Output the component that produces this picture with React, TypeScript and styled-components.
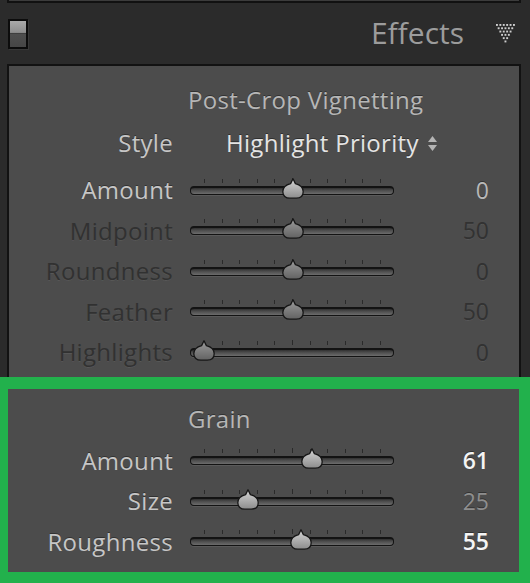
import styled, { createGlobalStyle } from 'styled-components';

const GlobalStyle = createGlobalStyle`
  html, body {
    margin: 0;
    padding: 0;
    background: #2b2b2b;
  }
  body {
    font-family: 'Open Sans', 'Noto Sans', sans-serif;
  }
`;

type Tone = 'light' | 'dim';
type ValueTone = 'light' | 'dim' | 'bright' | 'muted';

const labelColors: Record<Tone, string> = {
  light: '#c6c6c6',
  dim: '#313131',
};

const valueColors: Record<ValueTone, string> = {
  light: '#b8b8b8',
  dim: '#323232',
  bright: '#f4f4f4',
  muted: '#8e8e8e',
};

const Page = styled.div`
  width: 530px;
  height: 583px;
  overflow: hidden;
  background: #2b2b2b;
`;

const PrevPanelEdge = styled.div`
  height: 1px;
  margin: 0 9px 0 7px;
  background: #3c3c3c;
  border: 2px solid #111;
  border-top: none;
`;

const Header = styled.header`
  height: 61px;
  display: flex;
  align-items: center;
  padding: 0 15px 0 8px;
`;

const Toggle = styled.div`
  width: 16px;
  height: 26px;
  border: 2px solid #0c0c0c;
  background: linear-gradient(
    #aaaaaa 0%,
    #8e8e8e 44%,
    #3a3a3a 47%,
    #4e4e4e 52%,
    #464646 100%
  );
  box-shadow: 1px 1px 0 #383838;
`;

const PanelTitle = styled.h2`
  margin: 0 0 0 auto;
  font-size: 30px;
  font-weight: 400;
  line-height: 1;
  color: #9c9c9c;
  padding-bottom: 2px;
`;

const CollapseIcon = styled.svg`
  margin-left: 32px;
  flex: none;
`;

const Panel = styled.section`
  margin: 0 9px 0 7px;
  background: #4c4c4c;
  border: 2px solid #121212;
  border-bottom: none;
  padding: 19px 0 4.5px;
`;

const GrainBox = styled.section`
  background: #4c4c4c;
  border: solid #22b14c;
  border-width: 12px 11px 11px 8px;
  padding: 15px 0 10px 1px;
`;

const SectionTitle = styled.h3`
  margin: 0;
  height: 30px;
  line-height: 30px;
  padding-left: 179px;
  font-size: 24px;
  letter-spacing: 0.3px;
  font-weight: 400;
  color: #b6b6b6;
  text-shadow: 0 -1px 0 rgba(0, 0, 0, 0.35);
`;

const Row = styled.div<{ $height?: number }>`
  display: grid;
  grid-template-columns: 164px 204px 78px;
  column-gap: 17px;
  align-items: center;
  height: ${({ $height }) => $height ?? 40.5}px;
`;

const StyleRow = styled(Row)`
  margin: 13px 0 12px;
`;

const Rows = styled.div<{ $offset: number }>`
  margin-top: ${({ $offset }) => $offset}px;
`;

const Label = styled.div<{ $tone: Tone }>`
  text-align: right;
  font-size: 24px;
  letter-spacing: 0.3px;
  line-height: 1;
  color: ${({ $tone }) => labelColors[$tone]};
  text-shadow: ${({ $tone }) =>
    $tone === 'dim'
      ? '0 1px 0 rgba(255, 255, 255, 0.06)'
      : '0 -1px 0 rgba(0, 0, 0, 0.35)'};
`;

const Value = styled.div<{ $tone: ValueTone }>`
  text-align: right;
  font-size: 23px;
  line-height: 1;
  font-weight: ${({ $tone }) => ($tone === 'bright' ? 600 : 400)};
  color: ${({ $tone }) => valueColors[$tone]};
  text-shadow: ${({ $tone }) =>
    $tone === 'dim'
      ? '0 1px 0 rgba(255, 255, 255, 0.06)'
      : '0 -1px 0 rgba(0, 0, 0, 0.35)'};
`;

const Select = styled.div`
  grid-column: 2 / 4;
  display: flex;
  align-items: center;
  gap: 8px;
  padding-left: 36px;
  font-size: 24px;
  letter-spacing: 0.3px;
  line-height: 1;
  color: #e4e4e4;
  text-shadow: 0 -1px 0 rgba(0, 0, 0, 0.4);
`;

const SliderBox = styled.div`
  position: relative;
  height: 25px;
  display: flex;
  flex-direction: column;
`;

const Ticks = styled.div`
  height: 5px;
  display: flex;
  justify-content: space-between;
  padding: 0 13px 0 14px;
  margin-bottom: 3px;
`;

const Tick = styled.span<{ $major?: boolean }>`
  width: 1px;
  height: ${({ $major }) => ($major ? 5 : 4)}px;
  margin-top: ${({ $major }) => ($major ? 0 : 1)}px;
  background: #2a2a2a;
`;

const Track = styled.div`
  height: 6px;
  border: 1px solid #131313;
  border-top-width: 2px;
  border-radius: 4px;
  background: linear-gradient(#303030 0%, #4a4a4a 35%, #6c6c6c 100%);
  box-shadow: 0 1px 0 rgba(255, 255, 255, 0.08);
`;

const Thumb = styled.svg`
  position: absolute;
  top: 0;
`;

function SliderThumb({ tone, center }: { tone: Tone; center: number }) {
  const top = tone === 'light' ? '#d6d6d6' : '#9c9c9c';
  const bottom = tone === 'light' ? '#8c8c8c' : '#626262';
  const id = `thumb-${tone}`;
  return (
    <Thumb width="22" height="21" viewBox="0 0 22 21" style={{ left: center - 11 }}>
      <defs>
        <linearGradient id={id} x1="0" y1="0" x2="0" y2="1">
          <stop offset="0" stopColor={top} />
          <stop offset="1" stopColor={bottom} />
        </linearGradient>
      </defs>
      <path
        d="M11 0.8 L13.4 5.6 C18.2 6.8 21.2 9.6 21.2 13.8 C21.2 17.8 18.4 20.2 14.2 20.2 L7.8 20.2 C3.6 20.2 0.8 17.8 0.8 13.8 C0.8 9.6 3.8 6.8 8.6 5.6 Z"
        fill={`url(#${id})`}
        stroke="#161616"
        strokeWidth="1.3"
        strokeLinejoin="round"
      />
    </Thumb>
  );
}

type SliderSpec = {
  label: string;
  value: string;
  frac: number;
  tone: Tone;
  valueTone: ValueTone;
};

function SliderRow({ spec }: { spec: SliderSpec }) {
  const center = 14 + spec.frac * 177;
  return (
    <Row>
      <Label $tone={spec.tone}>{spec.label}</Label>
      <SliderBox>
        <Ticks>
          {Array.from({ length: 11 }, (_, i) => (
            <Tick key={i} $major={i === 5} />
          ))}
        </Ticks>
        <Track />
        <SliderThumb tone={spec.tone} center={center} />
      </SliderBox>
      <Value $tone={spec.valueTone}>{spec.value}</Value>
    </Row>
  );
}

const vignetting: SliderSpec[] = [
  { label: 'Amount', value: '0', frac: 0.5, tone: 'light', valueTone: 'light' },
  { label: 'Midpoint', value: '50', frac: 0.5, tone: 'dim', valueTone: 'dim' },
  { label: 'Roundness', value: '0', frac: 0.5, tone: 'dim', valueTone: 'dim' },
  { label: 'Feather', value: '50', frac: 0.5, tone: 'dim', valueTone: 'dim' },
  { label: 'Highlights', value: '0', frac: 0, tone: 'dim', valueTone: 'dim' },
];

const grain: SliderSpec[] = [
  { label: 'Amount', value: '61', frac: 0.61, tone: 'light', valueTone: 'bright' },
  { label: 'Size', value: '25', frac: 0.25, tone: 'light', valueTone: 'muted' },
  { label: 'Roughness', value: '55', frac: 0.55, tone: 'light', valueTone: 'bright' },
];

function TriangleDots() {
  const dots = [];
  for (let r = 0; r < 6; r++) {
    for (let c = 0; c < 6 - r; c++) {
      dots.push(
        <rect key={`${r}-${c}`} x={r * 1.7 + c * 3.4} y={r * 3.3} width="1.9" height="1.9" />
      );
    }
  }
  return (
    <CollapseIcon width="19" height="19" viewBox="0 0 19 19" fill="#cfcfcf">
      {dots}
    </CollapseIcon>
  );
}

function UpDownArrows() {
  return (
    <svg width="11" height="17" viewBox="0 0 11 17" fill="#b4b4b4">
      <path d="M5.5 1 L10 7 L1 7 Z" />
      <path d="M1 10 L10 10 L5.5 16 Z" />
    </svg>
  );
}

export default function App() {
  return (
    <>
      <GlobalStyle />
      <Page>
        <PrevPanelEdge />
        <Header>
          <Toggle />
          <PanelTitle>Effects</PanelTitle>
          <TriangleDots />
        </Header>
        <Panel>
          <SectionTitle>Post-Crop Vignetting</SectionTitle>
          <StyleRow $height={30}>
            <Label $tone="light">Style</Label>
            <Select>
              Highlight Priority
              <UpDownArrows />
            </Select>
          </StyleRow>
          <Rows $offset={0}>
            {vignetting.map((s) => (
              <SliderRow key={s.label} spec={s} />
            ))}
          </Rows>
        </Panel>
        <GrainBox>
          <SectionTitle>Grain</SectionTitle>
          <Rows $offset={6.5}>
            {grain.map((s) => (
              <SliderRow key={s.label} spec={s} />
            ))}
          </Rows>
        </GrainBox>
      </Page>
    </>
  );
}
